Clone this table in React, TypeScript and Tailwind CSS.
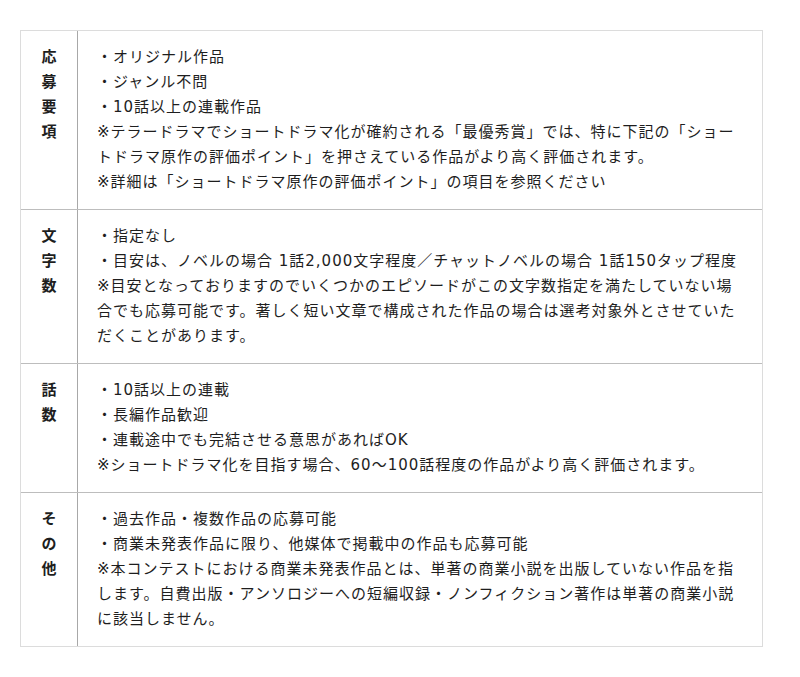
const rows: { head: string; lines: string[] }[] = [
  {
    head: "応募要項",
    lines: [
      "・オリジナル作品",
      "・ジャンル不問",
      "・10話以上の連載作品",
      "※テラードラマでショートドラマ化が確約される「最優秀賞」では、特に下記の「ショー",
      "トドラマ原作の評価ポイント」を押さえている作品がより高く評価されます。",
      "※詳細は「ショートドラマ原作の評価ポイント」の項目を参照ください",
    ],
  },
  {
    head: "文字数",
    lines: [
      "・指定なし",
      "・目安は、ノベルの場合 1話2,000文字程度／チャットノベルの場合 1話150タップ程度",
      "※目安となっておりますのでいくつかのエピソードがこの文字数指定を満たしていない場",
      "合でも応募可能です。著しく短い文章で構成された作品の場合は選考対象外とさせていた",
      "だくことがあります。",
    ],
  },
  {
    head: "話数",
    lines: [
      "・10話以上の連載",
      "・長編作品歓迎",
      "・連載途中でも完結させる意思があればOK",
      "※ショートドラマ化を目指す場合、60〜100話程度の作品がより高く評価されます。",
    ],
  },
  {
    head: "その他",
    lines: [
      "・過去作品・複数作品の応募可能",
      "・商業未発表作品に限り、他媒体で掲載中の作品も応募可能",
      "※本コンテストにおける商業未発表作品とは、単著の商業小説を出版していない作品を指",
      "します。自費出版・アンソロジーへの短編収録・ノンフィクション著作は単著の商業小説",
      "に該当しません。",
    ],
  },
]

export default function App() {
  return (
    <div
      className="min-h-[677px] bg-white pt-[30px] pl-[20px] text-[#1e1e1e]"
      style={{ fontFamily: '"DejaVu Sans", "Noto Sans CJK JP", sans-serif' }}
    >
      <div className="w-[743px] border border-[#dcdcdc]">
        {rows.map((r, i) => (
          <div key={r.head} className={`flex ${i > 0 ? "border-t border-[#bdbdbd]" : ""}`}>
            <div className="w-[57px] shrink-0 border-r border-[#a8a8a8] py-[14px] text-center text-[15px] font-bold leading-[25px]">
              {r.head.split("").map((c, j) => (
                <div key={j}>{c}</div>
              ))}
            </div>
            <div className="flex-1 overflow-hidden py-[14px] pl-[19px] pr-[10px] text-[15px] leading-[25px] tracking-[1px] whitespace-nowrap">
              {r.lines.map((l, j) => (
                <div key={j}>{l}</div>
              ))}
            </div>
          </div>
        ))}
      </div>
    </div>
  )
}
